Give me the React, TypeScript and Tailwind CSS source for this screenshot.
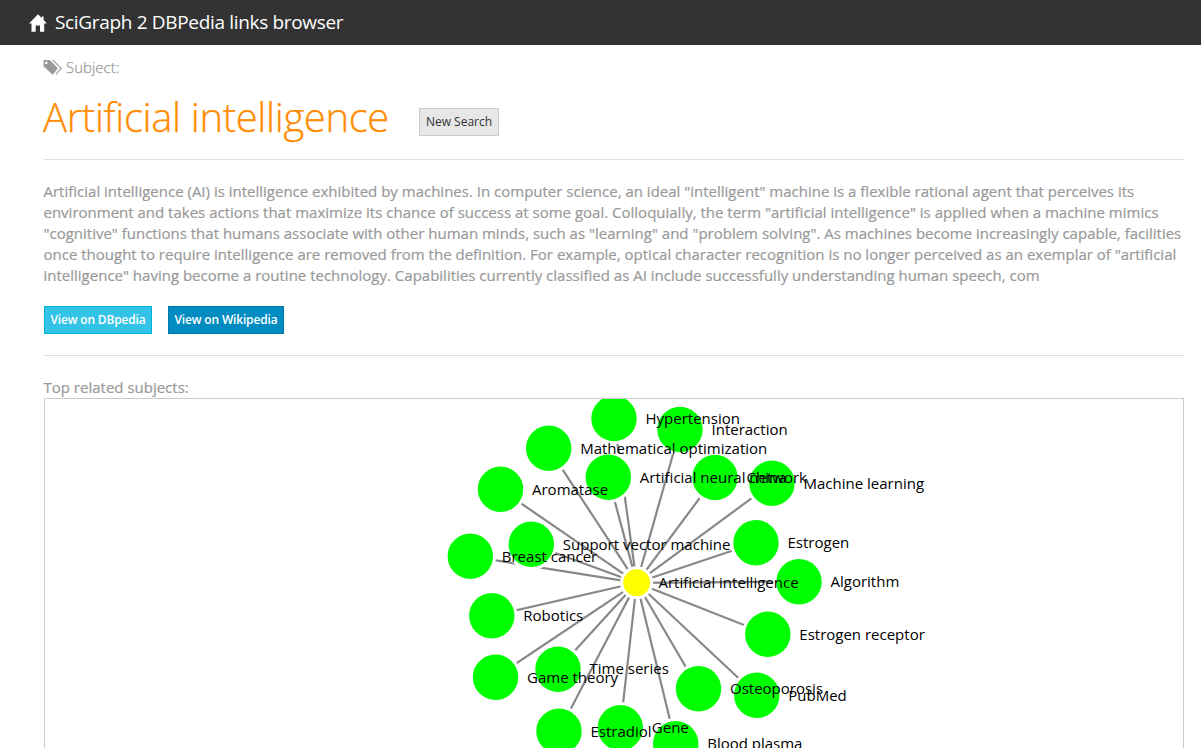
const nodes: [string, number, number][] = [
  ['Hypertension', 614, 418.5], ['Interaction', 680, 429.5], ['Mathematical optimization', 548.7, 448.3],
  ['Artificial neural network', 608.3, 477.3], ['China', 715, 477.5], ['Machine learning', 772, 483.3],
  ['Aromatase', 500.5, 489.3], ['Estrogen', 756, 542.8], ['Support vector machine', 531.3, 544.3],
  ['Breast cancer', 470.3, 556.3], ['Algorithm', 799, 581.7], ['Robotics', 491.8, 615.8],
  ['Estrogen receptor', 767.8, 634.3], ['Time series', 558, 669.2], ['Game theory', 495.5, 677.3],
  ['Osteoporosis', 698.5, 688.8], ['PubMed', 756.8, 695.3], ['Gene', 620.3, 727.8],
  ['Estradiol', 559, 731.3], ['Blood plasma', 675.7, 743.8],
];
const cx = 636.7, cy = 582.8;

function HomeIcon() {
  return (
    <svg className="mr-2 size-[18px] shrink-0" viewBox="0 0 18 18" fill="white">
      <path d="M9 .3 0 9.6h2.5V17.7h4.2v-6.1h4.3v6.1h4.2V9.6H18L14.6 6V2.6h-1.9V4z" />
    </svg>
  );
}

function TagsIcon() {
  return (
    <svg className="mr-[4px] h-[15px] w-[19px] shrink-0" viewBox="0 0 19 15" fill="#999">
      <path fillRule="evenodd" d="M.5 0h6.2l8.2 8.2-5.2 6.6L.5 6.2zM3.2 1.5a1.4 1.4 0 1 0 .01 0z" />
      <path d="M8.8 0h1.7L19 8.2l-5.6 6.6-.8-.7 4.9-5.9z" />
    </svg>
  );
}

export default function App() {
  return (
    <div className="h-[748px] w-full overflow-hidden bg-white font-['Open_Sans',sans-serif] text-[15px] leading-[21px] text-[#999]">
      <header className="flex h-[45px] items-center bg-[#333] pl-[29px] text-[19px] text-white">
        <HomeIcon />
        <span className="tracking-[-0.33px]">SciGraph 2 DBPedia links browser</span>
      </header>
      <main className="ml-[43px] mr-[17px]">
        <div className="flex h-[45px] items-center text-[15px] font-light [-webkit-text-stroke:0.25px_#999]"><TagsIcon />Subject:</div>
        <div className="ml-px flex h-[70px] items-start border-b border-[#ddd]">
          <h1 className="-ml-px w-[376px] whitespace-nowrap text-[40px] font-light leading-[54px] tracking-[-0.36px] text-[#ff8c00] [-webkit-text-stroke:0.25px_#ff8c00]">Artificial intelligence</h1>
          <button className="mt-[18px] h-[28px] w-[80px] border border-[#ccc] bg-[#e7e7e7] pb-[2px] text-[12px] text-[#333]">New Search</button>
        </div>
        <p className="mt-[21px] whitespace-nowrap pl-[0.5px] [-webkit-text-stroke:0.2px_#999]">
          Artificial intelligence (AI) is intelligence exhibited by machines. In computer science, an ideal "intelligent" machine is a flexible rational agent that perceives its<br />
          environment and takes actions that maximize its chance of success at some goal. Colloquially, the term "artificial intelligence" is applied when a machine mimics<br />
          "cognitive" functions that humans associate with other human minds, such as "learning" and "problem solving". As machines become increasingly capable, facilities<br />
          once thought to require intelligence are removed from the definition. For example, optical character recognition is no longer perceived as an exemplar of "artificial<br />
          intelligence" having become a routine technology. Capabilities currently classified as AI include successfully understanding human speech, com
        </p>
        <div className="ml-px mt-5 flex h-[50px] gap-4 border-b border-[#ddd] text-[12px] tracking-[-0.17px] text-white">
          <button className="h-[28px] w-[108px] whitespace-nowrap border border-[#00b3db] bg-[#33c3e6] pb-[2px] font-semibold">View on DBpedia</button>
          <button className="h-[28px] w-[116px] whitespace-nowrap border border-[#0079a8] bg-[#008cc1] pb-[2px] font-semibold">View on Wikipedia</button>
        </div>
        <div className="mt-[21px] pl-[0.5px] [-webkit-text-stroke:0.2px_#999]">Top related subjects:</div>
        <div className="ml-px h-[360px] border border-[#ccc]">
          <svg className="block h-[349px] w-full" viewBox="45 399 1138 349" preserveAspectRatio="xMinYMin meet">
            {nodes.map(([n, x, y]) => <line key={n} x1={cx} y1={cy} x2={x} y2={y} stroke="#888" strokeWidth="2.2" />)}
            {nodes.map(([n, x, y]) => <circle key={n} cx={x} cy={y} r="24.2" fill="#0f0" stroke="#fff" strokeWidth="3" />)}
            <circle cx={cx} cy={cy} r="15" fill="#ff0" stroke="#fff" strokeWidth="3" />
            <g fill="#000" fontSize="15">
              {nodes.map(([n, x, y]) => <text key={n} x={x + 31.5} y={y + 5.2}>{n}</text>)}
              <text x="658.5" y="588">Artificial intelligence</text>
            </g>
          </svg>
        </div>
      </main>
    </div>
  );
}
